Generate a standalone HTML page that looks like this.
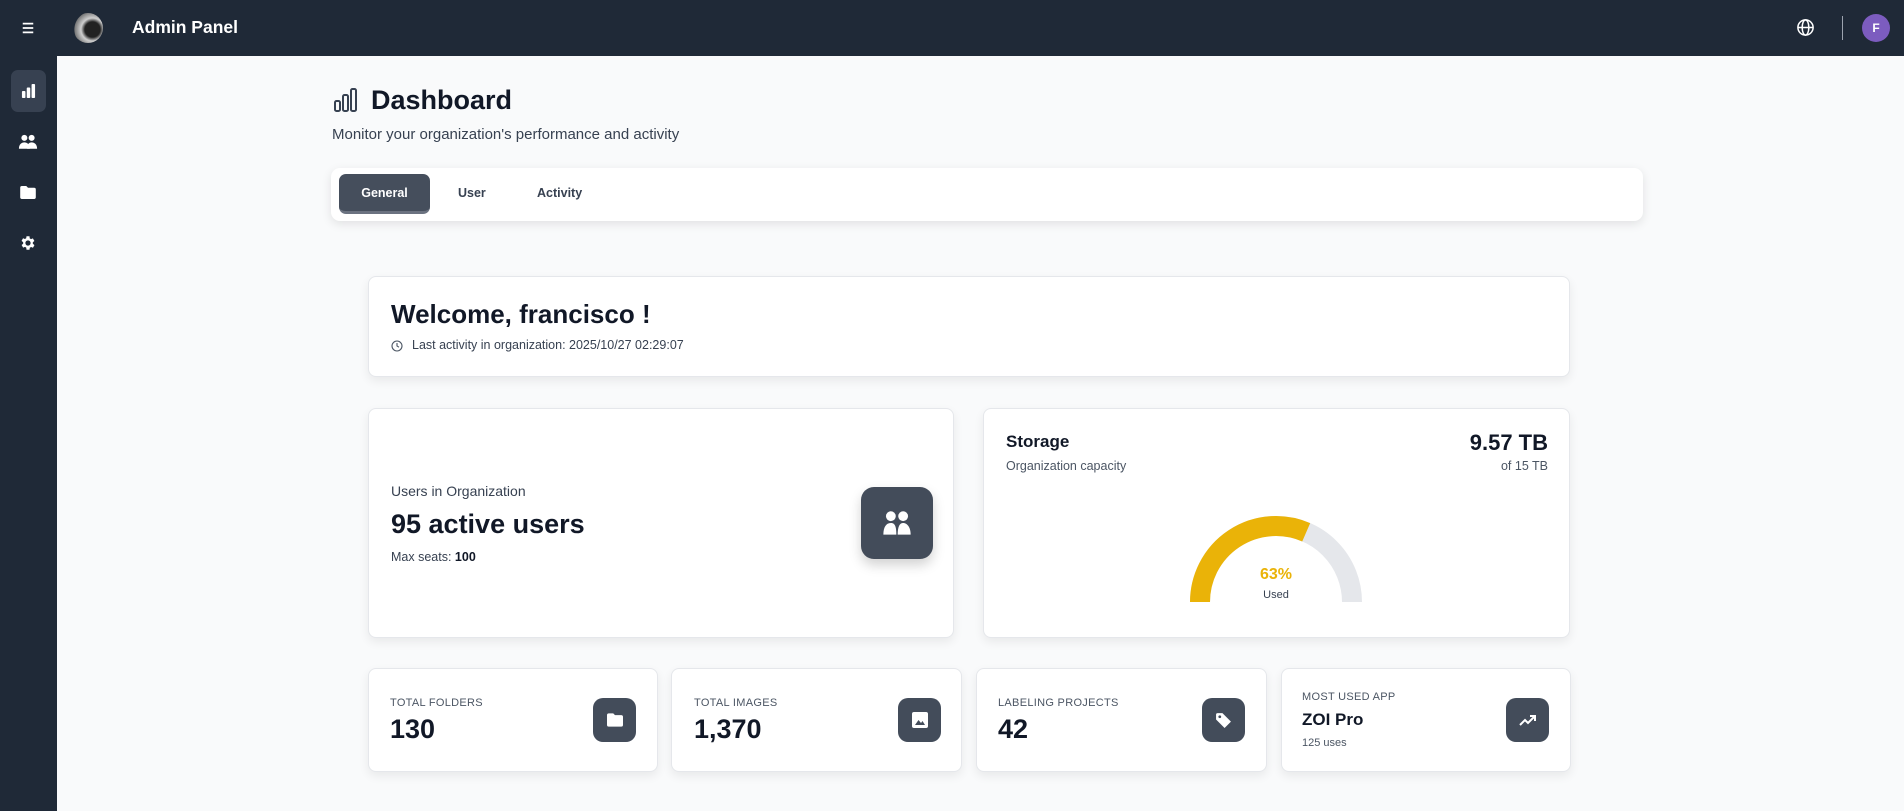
<!DOCTYPE html>
<html><head><meta charset="utf-8"><style>
*{box-sizing:border-box;margin:0;padding:0}
body{width:1904px;height:811px;overflow:hidden;font-family:"Liberation Sans",sans-serif;background:#f9fafb;color:#111827;position:relative}
.hdr{position:absolute;left:0;top:0;width:1904px;height:56px;background:#1f2937}
.side{position:absolute;left:0;top:56px;width:57px;height:755px;background:#1f2937}
.abs{position:absolute}
.card{position:absolute;background:#fff;border:1px solid #e5e7eb;border-radius:8px;box-shadow:0 4px 10px rgba(0,0,0,0.07)}
.ib{position:absolute;background:#434c5a;border-radius:10px;display:flex;align-items:center;justify-content:center}
.lbl{position:absolute;font-size:11px;color:#4b5563;letter-spacing:.3px}
.num{position:absolute;font-size:27px;font-weight:bold;color:#111827}
</style></head><body>
<div class="hdr"></div>
<div class="side"></div>
<svg class="abs" style="left:21px;top:21px" width="14" height="14" viewBox="0 0 16 16"><path d="M2 3h12M2 8h12M2 13h12" stroke="#fff" stroke-width="2"/></svg>
<div class="abs" style="left:73px;top:13px;width:30px;height:30px;border-radius:50%;background:radial-gradient(circle at 65% 55%,#222 0 30%,#cfcfcf 45%,#777 70%,#1f2937 72%)"></div>
<div class="abs" style="left:132px;top:17px;font-size:17.5px;font-weight:bold;color:#fff">Admin Panel</div>
<svg class="abs" style="left:1796px;top:18px" width="19" height="19" viewBox="0 0 20 20" fill="none" stroke="#fff" stroke-width="1.6"><circle cx="10" cy="10" r="8"/><ellipse cx="10" cy="10" rx="3.5" ry="8"/><path d="M2 10h16"/></svg>
<div class="abs" style="left:1842px;top:16px;width:1px;height:24px;background:#9ca3af"></div>
<div class="abs" style="left:1862px;top:14px;width:28px;height:28px;border-radius:50%;background:#7c5cbf;color:#fff;font-size:12px;font-weight:bold;text-align:center;line-height:28px">F</div>
<div class="abs" style="left:11px;top:70px;width:35px;height:42px;border-radius:7px;background:#374151"></div>
<svg class="abs" style="left:21px;top:84px" width="15" height="14" viewBox="0 0 17 16" fill="#fff"><rect x="1" y="8" width="4" height="8" rx="1"/><rect x="6.5" y="4" width="4" height="12" rx="1"/><rect x="12" y="0" width="4" height="16" rx="1"/></svg>
<svg class="abs" style="left:18px;top:134px" width="20" height="15" viewBox="0 0 22 16" fill="#fff"><circle cx="7" cy="4" r="3.3"/><circle cx="15" cy="4" r="3.3"/><path d="M1 16c0-5 3-7 6-7s6 2 6 7z"/><path d="M10 16c0-5 2-7 5-7s6 2 6 7z"/></svg>
<svg class="abs" style="left:20px;top:186px" width="16" height="13" viewBox="0 0 18 15" fill="#fff"><path d="M0 2a2 2 0 0 1 2-2h5l2 2h7a2 2 0 0 1 2 2v9a2 2 0 0 1-2 2H2a2 2 0 0 1-2-2z"/></svg>
<svg class="abs" style="left:19px;top:234px" width="18" height="18" viewBox="0 0 24 24"><path fill="#fff" d="M19.4 13a7.5 7.5 0 0 0 0-2l2.1-1.6-2-3.5-2.5 1a7.6 7.6 0 0 0-1.7-1L15 3h-4l-.4 2.7a7.6 7.6 0 0 0-1.7 1l-2.5-1-2 3.5L6.6 11a7.5 7.5 0 0 0 0 2l-2.1 1.6 2 3.5 2.5-1a7.6 7.6 0 0 0 1.7 1L11 21h4l.4-2.7a7.6 7.6 0 0 0 1.7-1l2.5 1 2-3.5zM13 15.5A3.5 3.5 0 1 1 13 8.5a3.5 3.5 0 0 1 0 7z" transform="translate(-1 0)"/></svg>
<svg class="abs" style="left:333px;top:88px" width="25" height="24" viewBox="0 0 25 24" fill="none" stroke="#374151" stroke-width="2"><rect x="2" y="13" width="5" height="10" rx="1.5"/><rect x="10" y="7" width="5" height="16" rx="1.5"/><rect x="18" y="1" width="5" height="22" rx="1.5"/></svg>
<div class="abs" style="left:371px;top:85px;font-size:27px;font-weight:bold">Dashboard</div>
<div class="abs" style="left:332px;top:126px;font-size:15px;color:#374151">Monitor your organization's performance and activity</div>
<div class="abs" style="left:331px;top:168px;width:1312px;height:53px;background:#fff;border-radius:9px;box-shadow:0 3px 10px rgba(0,0,0,0.1)"></div>
<div class="abs" style="left:339px;top:174px;width:91px;height:40px;border-radius:7px;background:#454e5c;border-bottom:3px solid #6b7280;color:#fff;font-size:12.5px;font-weight:bold;text-align:center;line-height:38px">General</div>
<div class="abs" style="left:458px;top:186px;font-size:12.5px;font-weight:bold;color:#374151">User</div>
<div class="abs" style="left:537px;top:186px;font-size:12.5px;font-weight:bold;color:#374151">Activity</div>
<div class="card" style="left:368px;top:276px;width:1202px;height:101px"></div>
<div class="abs" style="left:391px;top:299px;font-size:26px;font-weight:bold">Welcome, francisco !</div>
<svg class="abs" style="left:391px;top:340px" width="12" height="12" viewBox="0 0 12 12" fill="none" stroke="#4b5563" stroke-width="1.1"><circle cx="6" cy="6" r="5"/><path d="M6 3v3l2 1.2"/></svg>
<div class="abs" style="left:412px;top:338px;font-size:12.5px;color:#374151">Last activity in organization: 2025/10/27 02:29:07</div>
<div class="card" style="left:368px;top:408px;width:586px;height:230px"></div>
<div class="abs" style="left:391px;top:483px;font-size:14px;color:#374151">Users in Organization</div>
<div class="abs" style="left:391px;top:509px;font-size:27px;font-weight:bold">95 active users</div>
<div class="abs" style="left:391px;top:550px;font-size:12.5px;color:#374151">Max seats: <b style="color:#111827">100</b></div>
<div class="ib" style="left:861px;top:487px;width:72px;height:72px;border-radius:13px;box-shadow:0 6px 12px rgba(0,0,0,0.18)"><svg width="30" height="26" viewBox="0 0 22 19" fill="#fff"><circle cx="6.5" cy="4.5" r="3.6"/><circle cx="15.5" cy="4.5" r="3.6"/><path d="M1 18c0-6 2.5-8.5 5.5-8.5S10.5 12 10.5 18z"/><path d="M11.5 18c0-6 1.5-8.5 4-8.5S21 12 21 18z"/></svg></div>
<div class="card" style="left:983px;top:408px;width:587px;height:230px"></div>
<div class="abs" style="left:1006px;top:432px;font-size:17px;font-weight:bold">Storage</div>
<div class="abs" style="left:1006px;top:459px;font-size:12.5px;color:#4b5563">Organization capacity</div>
<div class="abs" style="left:1400px;top:430px;width:148px;text-align:right;font-size:22px;font-weight:bold">9.57 TB</div>
<div class="abs" style="left:1400px;top:459px;width:148px;text-align:right;font-size:12.5px;color:#4b5563">of 15 TB</div>
<svg class="abs" style="left:1180px;top:500px" width="192" height="104" viewBox="1180 500 192 104" fill="none" stroke-width="20"><path d="M1200 602A76 76 0 0 1 1352 602" stroke="#e5e7eb"/><path d="M1200 602A76 76 0 0 1 1306.2 532.3" stroke="#eab308"/></svg>
<div class="abs" style="left:1236px;top:566px;width:80px;text-align:center;font-size:16px;font-weight:bold;color:#eab308">63%</div>
<div class="abs" style="left:1236px;top:589px;width:80px;text-align:center;font-size:11px;color:#374151">Used</div>
<div class="card" style="left:368px;top:668px;width:290px;height:104px"></div>
<div class="card" style="left:671px;top:668px;width:291px;height:104px"></div>
<div class="card" style="left:976px;top:668px;width:291px;height:104px"></div>
<div class="card" style="left:1281px;top:668px;width:290px;height:104px"></div>
<div class="lbl" style="left:390px;top:697px">TOTAL FOLDERS</div>
<div class="num" style="left:390px;top:714px">130</div>
<div class="lbl" style="left:694px;top:697px">TOTAL IMAGES</div>
<div class="num" style="left:694px;top:714px">1,370</div>
<div class="lbl" style="left:998px;top:697px">LABELING PROJECTS</div>
<div class="num" style="left:998px;top:714px">42</div>
<div class="lbl" style="left:1302px;top:691px">MOST USED APP</div>
<div class="abs" style="left:1302px;top:710px;font-size:17px;font-weight:bold">ZOI Pro</div>
<div class="abs" style="left:1302px;top:737px;font-size:11px;color:#4b5563">125 uses</div>
<div class="ib" style="left:593px;top:698px;width:43px;height:44px"><svg width="16" height="14" viewBox="0 0 18 15" fill="#fff"><path d="M0 2a2 2 0 0 1 2-2h5l2 2h7a2 2 0 0 1 2 2v9a2 2 0 0 1-2 2H2a2 2 0 0 1-2-2z"/></svg></div>
<div class="ib" style="left:898px;top:698px;width:43px;height:44px"><svg width="16" height="16" viewBox="0 0 16 16"><rect x="0" y="0" width="16" height="16" rx="2" fill="#fff"/><path d="M3 13l3.5-5 2.5 3 1.5-2 2.5 4z" fill="#434c5a"/></svg></div>
<div class="ib" style="left:1202px;top:698px;width:43px;height:44px"><svg width="17" height="17" viewBox="0 0 16 16"><path d="M1 2.5V7l8 8 6-6-8-8H2.5A1.5 1.5 0 0 0 1 2.5z" fill="#fff"/><circle cx="4.5" cy="4.5" r="1.3" fill="#434c5a"/></svg></div>
<div class="ib" style="left:1506px;top:698px;width:43px;height:44px"><svg width="18" height="12" viewBox="0 0 18 12" fill="none" stroke="#fff" stroke-width="2"><path d="M1 11l5-5 3 3 7-7M11 2h5v5"/></svg></div>
</body></html>
